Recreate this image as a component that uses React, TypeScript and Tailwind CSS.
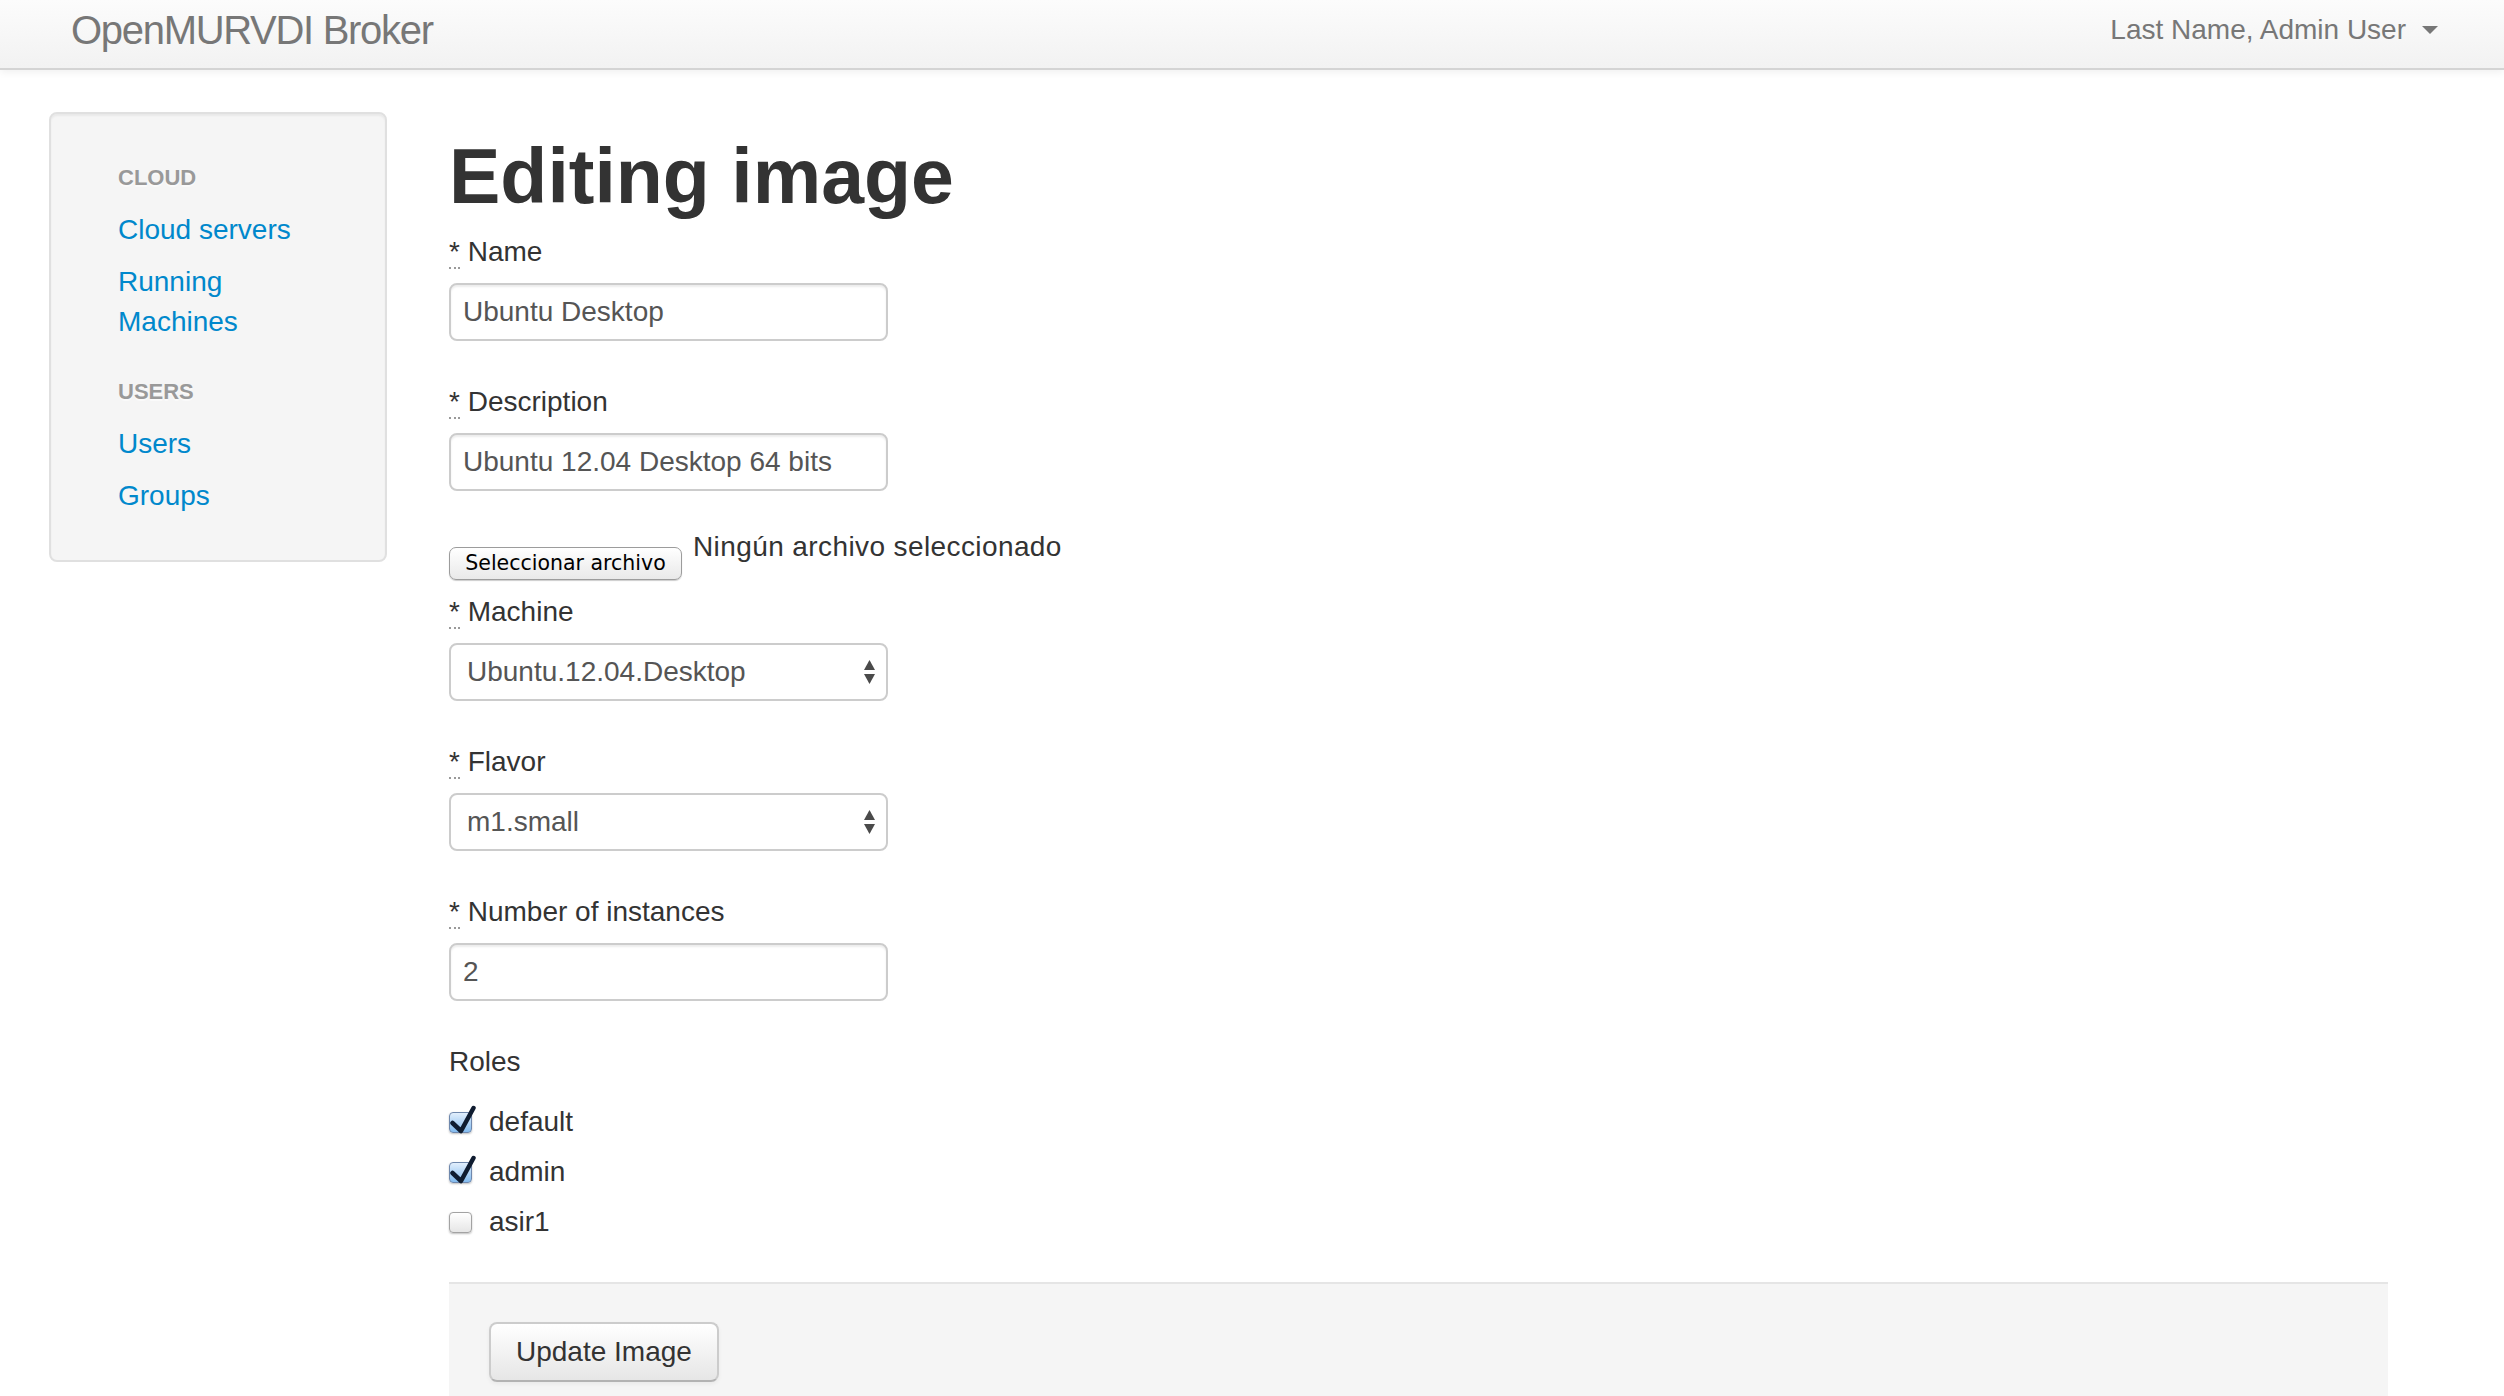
import React from "react"

const sidebar = [
  { header: "Cloud", links: ["Cloud servers", "Running Machines"] },
  { header: "Users", links: ["Users", "Groups"] },
]

const roles = [
  { name: "default", checked: true },
  { name: "admin", checked: true },
  { name: "asir1", checked: false },
]

function Navbar() {
  return (
    <header className="h-[70px] flex items-start justify-between border-b-2 border-[#d4d4d4] bg-linear-to-b from-[#fcfcfc] to-[#f2f2f2] shadow-[0_2px_8px_rgba(0,0,0,0.065)] pl-[71px] pr-[66px]">
      <a href="#" className="mt-[10px] text-[40px] leading-[40px] tracking-[-1.3px] text-[#777]">
        OpenMURVDI Broker
      </a>
      <a href="#" className="mt-[10px] flex items-center text-[28px] leading-[40px] text-[#777]">
        Last Name, Admin User
        <span className="ml-[16px] h-0 w-0 border-x-[8px] border-t-[8px] border-x-transparent border-t-[#777]" />
      </a>
    </header>
  )
}

function Sidebar() {
  return (
    <nav className="w-[338px] shrink-0 self-start rounded-[8px] border-2 border-[#e0e0e0] bg-[#f5f5f5] shadow-[inset_0_2px_2px_rgba(0,0,0,0.05)] py-[38px] pl-[67px] pr-[69px]">
      <ul>
        {sidebar.map((group, i) => (
          <React.Fragment key={group.header}>
            <li
              className={`py-[6px] text-[22px] leading-[40px] font-bold uppercase text-[#999] [text-shadow:0_2px_0_rgba(255,255,255,0.5)] ${i > 0 ? "mt-[18px]" : ""}`}
            >
              {group.header}
            </li>
            {group.links.map((link) => (
              <li key={link} className="py-[6px] text-[28px] leading-[40px]">
                <a href="#" className="text-[#0088cc]">
                  {link}
                </a>
              </li>
            ))}
          </React.Fragment>
        ))}
      </ul>
    </nav>
  )
}

function Label({ text, className = "" }: { text: string; className?: string }) {
  return (
    <label className={`block text-[28px] leading-[40px] text-[#333] ${className}`}>
      <abbr title="required" className="no-underline border-b-2 border-dotted border-[#999]">
        *
      </abbr>{" "}
      {text}
    </label>
  )
}

function TextInput({ value }: { value: string }) {
  return (
    <input
      type="text"
      readOnly
      defaultValue={value}
      className="mt-[11px] block h-[58px] w-[439px] rounded-[8px] border-2 border-[#ccc] bg-white px-[12px] text-[28px] text-[#555] shadow-[inset_0_2px_2px_rgba(0,0,0,0.075)] outline-none"
    />
  )
}

function Select({ value }: { value: string }) {
  return (
    <div className="mt-[11px] flex h-[58px] w-[439px] items-center justify-between rounded-[8px] border-2 border-[#ccc] bg-white pl-[16px] pr-[11px] text-[28px] text-[#555]">
      <span>{value}</span>
      <svg width="11" height="24" viewBox="0 0 11 24">
        <polygon points="0,10 5.5,0 11,10" fill="#4a4a4a" />
        <polygon points="0,14 11,14 5.5,24" fill="#4a4a4a" />
      </svg>
    </div>
  )
}

function Checkbox({ name, checked }: { name: string; checked: boolean }) {
  return (
    <label className="flex items-start text-[28px] leading-[40px] text-[#333]">
      <span
        className={`relative mt-[10px] h-[21px] w-[23px] shrink-0 rounded-[4px] border shadow-[0_1px_2px_rgba(0,0,0,0.25)] ${
          checked
            ? "border-[#6f88ad] bg-linear-to-b from-[#e2effc] to-[#83bbef]"
            : "border-[#a3a3a3] bg-linear-to-b from-white to-[#e6e6e6]"
        }`}
      >
        {checked && (
          <svg className="absolute -top-[8px] -left-[1px]" width="28" height="30" viewBox="0 0 28 30">
            <path
              d="M3.5 18 L12 26 L24.5 3"
              fill="none"
              stroke="#0f1c30"
              strokeWidth="4.5"
              strokeLinecap="round"
              strokeLinejoin="round"
            />
          </svg>
        )}
      </span>
      <span className="ml-[17px]">{name}</span>
    </label>
  )
}

export default function App() {
  return (
    <div className="h-[1396px] overflow-hidden bg-white text-[#333] font-['Liberation_Sans',Arial,Helvetica,sans-serif]">
      <Navbar />

      <div className="flex pl-[49px] pr-[116px] pt-[42px]">
        <Sidebar />

        <main className="ml-[62px] flex-1">
          <h1 className="mt-[24px] text-[77px] leading-[80px] font-bold text-[#333]">Editing image</h1>

          {/* Name / description */}
          <Label text="Name" className="mt-[16px]" />
          <TextInput value="Ubuntu Desktop" />

          <Label text="Description" className="mt-[41px]" />
          <TextInput value="Ubuntu 12.04 Desktop 64 bits" />

          {/* File */}
          <div className="mt-[36px] flex items-start">
            <button className="mt-[20px] flex h-[33px] w-[233px] items-center justify-center rounded-[7px] border border-[#9c9c9c] bg-linear-to-b from-white to-[#e9e9e9] text-[20.5px] text-black shadow-[0_1px_1px_rgba(0,0,0,0.2)] font-['DejaVu_Sans',sans-serif]">
              Seleccionar archivo
            </button>
            <span className="ml-[11px] text-[28px] leading-[40px] tracking-[0.4px] text-[#333]">
              Ningún archivo seleccionado
            </span>
          </div>

          <Label text="Machine" className="mt-[12px]" />
          <Select value="Ubuntu.12.04.Desktop" />

          <Label text="Flavor" className="mt-[41px]" />
          <Select value="m1.small" />

          <Label text="Number of instances" className="mt-[41px]" />
          <TextInput value="2" />

          {/* Roles */}
          <p className="mt-[41px] text-[28px] leading-[40px] text-[#333]">Roles</p>
          <div className="mt-[20px] flex flex-col gap-[10px]">
            {roles.map((r) => (
              <Checkbox key={r.name} name={r.name} checked={r.checked} />
            ))}
          </div>

          {/* Actions */}
          <div className="mt-[40px] border-t-2 border-[#e5e5e5] bg-[#f5f5f5] pt-[38px] pb-[40px] pl-[40px]">
            <button className="h-[60px] rounded-[8px] border-2 border-[#ccc] border-b-[#b3b3b3] bg-linear-to-b from-white to-[#e6e6e6] px-[25px] text-[28px] text-[#333] shadow-[inset_0_2px_0_rgba(255,255,255,0.2),0_2px_4px_rgba(0,0,0,0.05)]">
              Update Image
            </button>
          </div>
        </main>
      </div>
    </div>
  )
}
